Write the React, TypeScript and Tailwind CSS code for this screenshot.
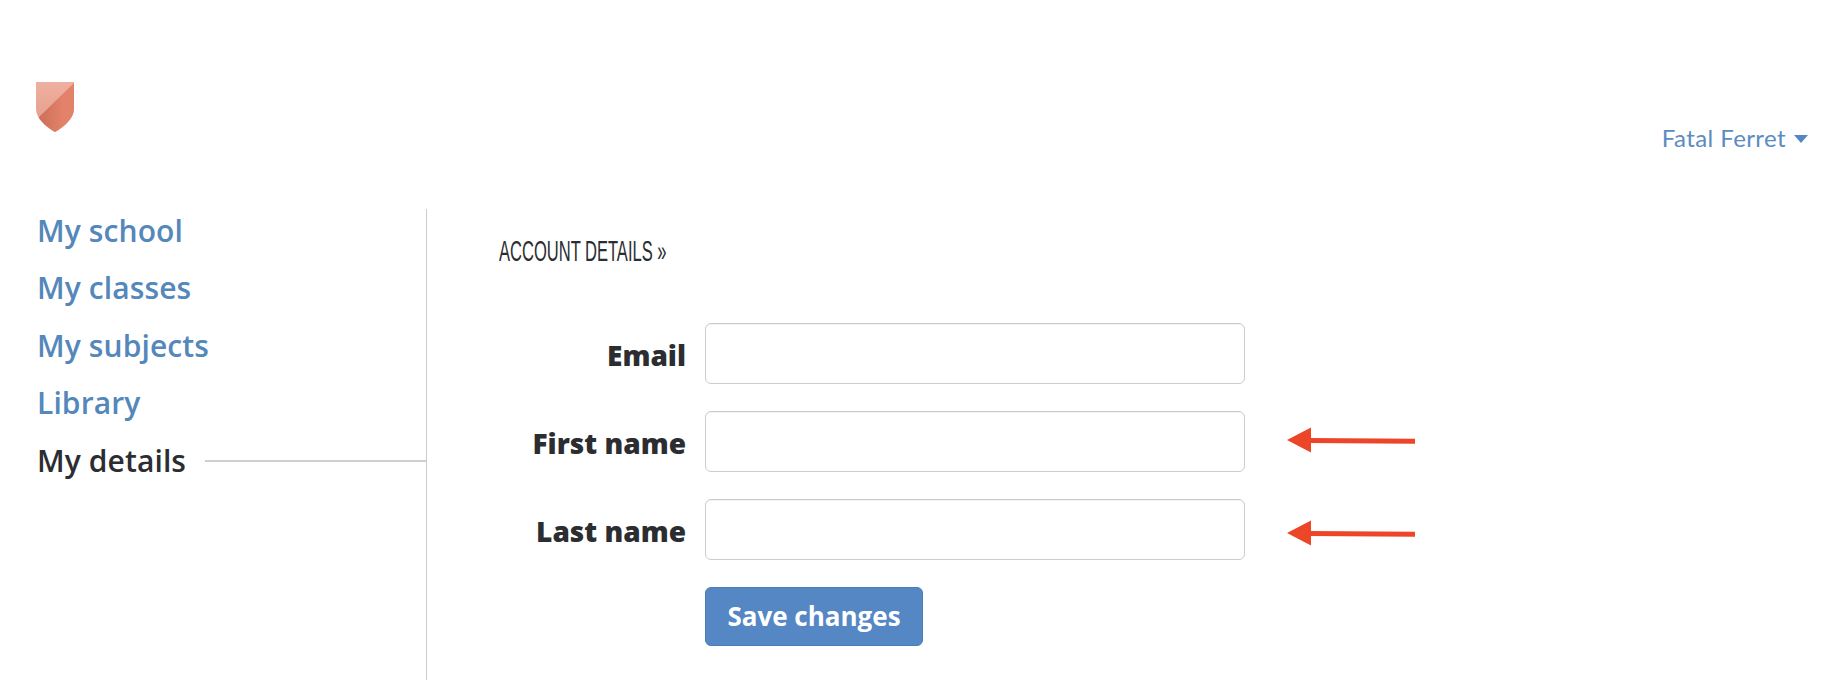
const sans = "font-['Open_Sans',sans-serif]";

function Shield() {
  return (
    <svg width="38" height="50" viewBox="0 0 38 50" className="block">
      <defs>
        <clipPath id="sh">
          <path d="M0 0H38V27C38 36 28 45 19 50C10 45 0 36 0 27Z" />
        </clipPath>
        <linearGradient id="lt" x1="0" y1="0" x2="0" y2="1">
          <stop offset="0" stopColor="#efb0a0" />
          <stop offset="1" stopColor="#e49a88" />
        </linearGradient>
        <linearGradient id="dk" x1="0" y1="0" x2="1" y2="0">
          <stop offset="0" stopColor="#c96c56" />
          <stop offset="0.7" stopColor="#e2826a" />
          <stop offset="1" stopColor="#e2826a" />
        </linearGradient>
      </defs>
      <g clipPath="url(#sh)">
        <rect width="38" height="50" fill="url(#lt)" />
        <path d="M38 1V50H0V38Z" fill="url(#dk)" />
      </g>
    </svg>
  );
}

function Arrow({ offset }: { offset: string }) {
  return (
    <svg width="130" height="26" viewBox="0 0 130 26" className={`block ml-[41px] shrink-0 ${offset}`}>
      <path d="M22 11L129 11.7V16.7L22 16Z" fill="#ec4527" />
      <path d="M1 13L25 0.5V25.5Z" fill="#ec4527" />
    </svg>
  );
}

function Row({ label, arrow }: { label: string; arrow?: string }) {
  return (
    <div className="flex items-center h-[61px]">
      <label className="w-[187px] mt-[2px] text-right text-[#2b2d30] text-[28px] font-extrabold leading-none whitespace-nowrap">{label}</label>
      <div className="ml-[19px] w-[540px] h-[61px] rounded-[6px] border border-[#cccccc] bg-white shadow-[inset_0_1px_1px_rgba(0,0,0,0.05)]" />
      {arrow && <Arrow offset={arrow} />}
    </div>
  );
}

export default function App() {
  const links = ["My school", "My classes", "My subjects", "Library"];
  return (
    <div className={`${sans} w-[1836px] h-[680px] bg-white overflow-hidden`}>
      <header className="h-[209px] flex justify-between pl-9 pr-7">
        <div className="pt-[82px]">
          <Shield />
        </div>
        <div className="pt-[121px] flex items-center h-[155px] font-['Lato',sans-serif] text-[#5b8cbf] text-[24px] leading-[34px] tracking-[0.4px]">
          Fatal Ferret
          <span className="ml-[8px] mt-[1px] w-0 h-0 border-x-[7px] border-x-transparent border-t-[8px] border-t-[#5487c4]" />
        </div>
      </header>
      <div className="flex h-[471px]">
        <nav className="w-[427px] shrink-0 border-r border-[#cccccc] pl-[37px] text-[30px] font-semibold leading-[57.4px] tracking-[0.1px]">
          <div className="-mt-[7px]">
            {links.map((l) => (
              <a key={l} className="block text-[#5487ba]">{l}</a>
            ))}
            <div className="flex items-center text-[#2b2d30]">
              My details
              <span className="ml-[19px] flex-1 h-[2px] bg-[#cfcfcf] mt-[1px]" />
            </div>
          </div>
        </nav>
        <main className="pl-[72px] flex-1">
          <div className="mt-[20px] h-[44px] flex items-center">
            <h2 className="font-['Liberation_Sans',sans-serif] text-[#2b2d30] text-[29px] leading-none whitespace-nowrap origin-left scale-x-[0.57]">
              ACCOUNT DETAILS »
            </h2>
          </div>
          <form className="mt-[50px] flex flex-col gap-[27px]">
            <Row label="Email" />
            <Row label="First name" arrow="-mt-[3px]" />
            <Row label="Last name" arrow="mt-[7px]" />
            <button
              type="button"
              className="ml-[206px] w-[218px] h-[59px] rounded-[6px] bg-[#5487c4] border border-[#4a7cb6] text-white text-[26px] font-bold"
            >
              Save changes
            </button>
          </form>
        </main>
      </div>
    </div>
  );
}
